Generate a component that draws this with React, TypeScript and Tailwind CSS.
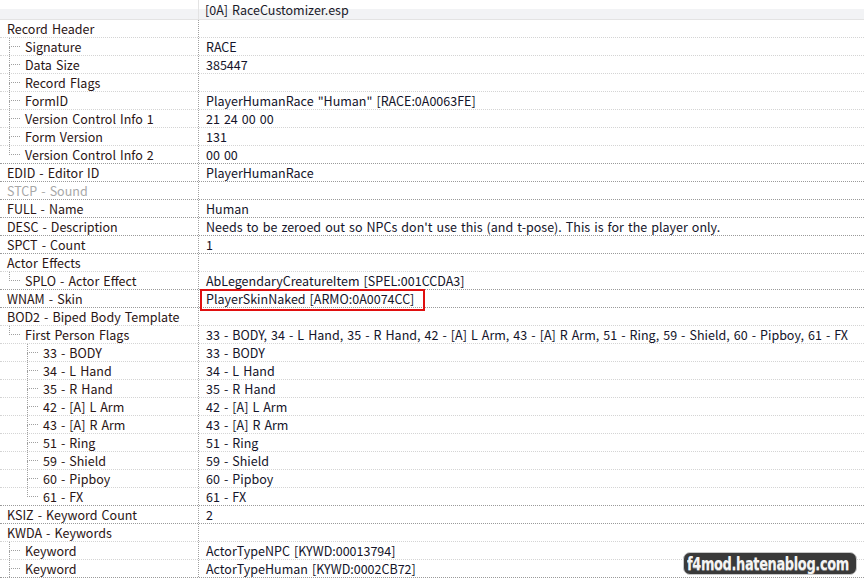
import type { ReactNode } from 'react';

interface Row {
  level: 0 | 1 | 2;
  name: string;
  value: string;
  last?: boolean;
  disabled?: boolean;
  highlight?: boolean;
}

const rows: Row[] = [
  { level: 0, name: 'Record Header', value: '' },
  { level: 1, name: 'Signature', value: 'RACE' },
  { level: 1, name: 'Data Size', value: '385447' },
  { level: 1, name: 'Record Flags', value: '' },
  { level: 1, name: 'FormID', value: 'PlayerHumanRace "Human" [RACE:0A0063FE]' },
  { level: 1, name: 'Version Control Info 1', value: '21 24 00 00' },
  { level: 1, name: 'Form Version', value: '131' },
  { level: 1, name: 'Version Control Info 2', value: '00 00', last: true },
  { level: 0, name: 'EDID - Editor ID', value: 'PlayerHumanRace' },
  { level: 0, name: 'STCP - Sound', value: '', disabled: true },
  { level: 0, name: 'FULL - Name', value: 'Human' },
  {
    level: 0,
    name: 'DESC - Description',
    value: "Needs to be zeroed out so NPCs don't use this (and t-pose). This is for the player only."
  },
  { level: 0, name: 'SPCT - Count', value: '1' },
  { level: 0, name: 'Actor Effects', value: '' },
  { level: 1, name: 'SPLO - Actor Effect', value: 'AbLegendaryCreatureItem [SPEL:001CCDA3]', last: true },
  { level: 0, name: 'WNAM - Skin', value: 'PlayerSkinNaked [ARMO:0A0074CC]', highlight: true },
  { level: 0, name: 'BOD2 - Biped Body Template', value: '' },
  {
    level: 1,
    name: 'First Person Flags',
    value:
      '33 - BODY, 34 - L Hand, 35 - R Hand, 42 - [A] L Arm, 43 - [A] R Arm, 51 - Ring, 59 - Shield, 60 - Pipboy, 61 - FX',
    last: true
  },
  { level: 2, name: '33 - BODY', value: '33 - BODY' },
  { level: 2, name: '34 - L Hand', value: '34 - L Hand' },
  { level: 2, name: '35 - R Hand', value: '35 - R Hand' },
  { level: 2, name: '42 - [A] L Arm', value: '42 - [A] L Arm' },
  { level: 2, name: '43 - [A] R Arm', value: '43 - [A] R Arm' },
  { level: 2, name: '51 - Ring', value: '51 - Ring' },
  { level: 2, name: '59 - Shield', value: '59 - Shield' },
  { level: 2, name: '60 - Pipboy', value: '60 - Pipboy' },
  { level: 2, name: '61 - FX', value: '61 - FX', last: true },
  { level: 0, name: 'KSIZ - Keyword Count', value: '2' },
  { level: 0, name: 'KWDA - Keywords', value: '' },
  { level: 1, name: 'Keyword', value: 'ActorTypeNPC [KYWD:00013794]' },
  { level: 1, name: 'Keyword', value: 'ActorTypeHuman [KYWD:0002CB72]' }
];

// tree connector: vertical + horizontal dotted lines in an 18px slot
function Connector({ last }: { last?: boolean }) {
  return (
    <div className="flex h-full w-[18px] shrink-0 flex-col pl-[9px]">
      <div className="h-[9px] w-[11px] border-b border-l border-dotted border-[#a0a0a0]" />
      <div className={`flex-1 ${last ? '' : 'border-l border-dotted border-[#a0a0a0]'}`} />
    </div>
  );
}

function NameCell({ row }: { row: Row }) {
  let indent: ReactNode = null;
  if (row.level === 1) {
    indent = <Connector last={row.last} />;
  } else if (row.level === 2) {
    indent = (
      <>
        <div className="w-[18px] shrink-0" />
        <Connector last={row.last} />
      </>
    );
  }
  return (
    <div className="flex h-full w-[199px] shrink-0 items-stretch overflow-hidden border-r border-dotted border-[#a0a0a0]">
      {indent}
      <span
        className={`flex items-center whitespace-nowrap pl-[7px] ${
          row.disabled ? 'text-[#a8a8a8]' : 'text-[#2a1414]'
        }`}
      >
        {row.name}
      </span>
    </div>
  );
}

export default function App() {
  return (
    <div
      className="relative h-[581px] w-[864px] overflow-hidden bg-white text-[12.5px] leading-[17px] [word-spacing:1.25px]"
      style={{ fontFamily: '"Noto Sans CJK JP", "Noto Sans", sans-serif' }}
    >
      <div className="flex h-[20px] border-b border-[#e3e3e3] bg-[linear-gradient(#ffffff_0%,#ffffff_45%,#f2f3f5_50%,#f2f3f5_100%)]">
        <div className="w-[199px] shrink-0 border-r border-[#e3e3e3]" />
        <div className="flex items-center pl-[6px] text-[#1a1a2a]">[0A] RaceCustomizer.esp</div>
      </div>

      {rows.map((row, index) => {
        const next = rows[index + 1];
        const dark = !next || next.level === 0;
        return (
          <div
            key={`${row.name}-${index}`}
            className={`flex h-[18px] border-b border-dotted ${dark ? 'border-[#9a9a9a]' : 'border-[#d4d4d4]'}`}
          >
            <NameCell row={row} />
            <div className="relative flex min-w-0 flex-1 items-center whitespace-nowrap pl-[7px] text-[#14142a]">
              {row.value}
              {row.highlight ? (
                <div className="absolute left-[1px] top-[-1px] h-[22px] w-[225px] border-2 border-[#e01010]" />
              ) : null}
            </div>
          </div>
        );
      })}

      <div className="absolute left-[683px] top-[552px] h-[23px] w-[174px] overflow-hidden rounded-[7px] border border-[#c8c8c8] bg-[#3a3a3a] pl-[3px] leading-[21px] [word-spacing:0]">
        <span
          className="inline-block origin-left scale-x-[0.72] text-[18px] font-bold tracking-[-0.5px] text-[#f4f4f4]"
          style={{ fontFamily: '"DejaVu Sans", sans-serif', textShadow: '0 1px 0 #888' }}
        >
          f4mod.hatenablog.com
        </span>
      </div>
    </div>
  );
}
